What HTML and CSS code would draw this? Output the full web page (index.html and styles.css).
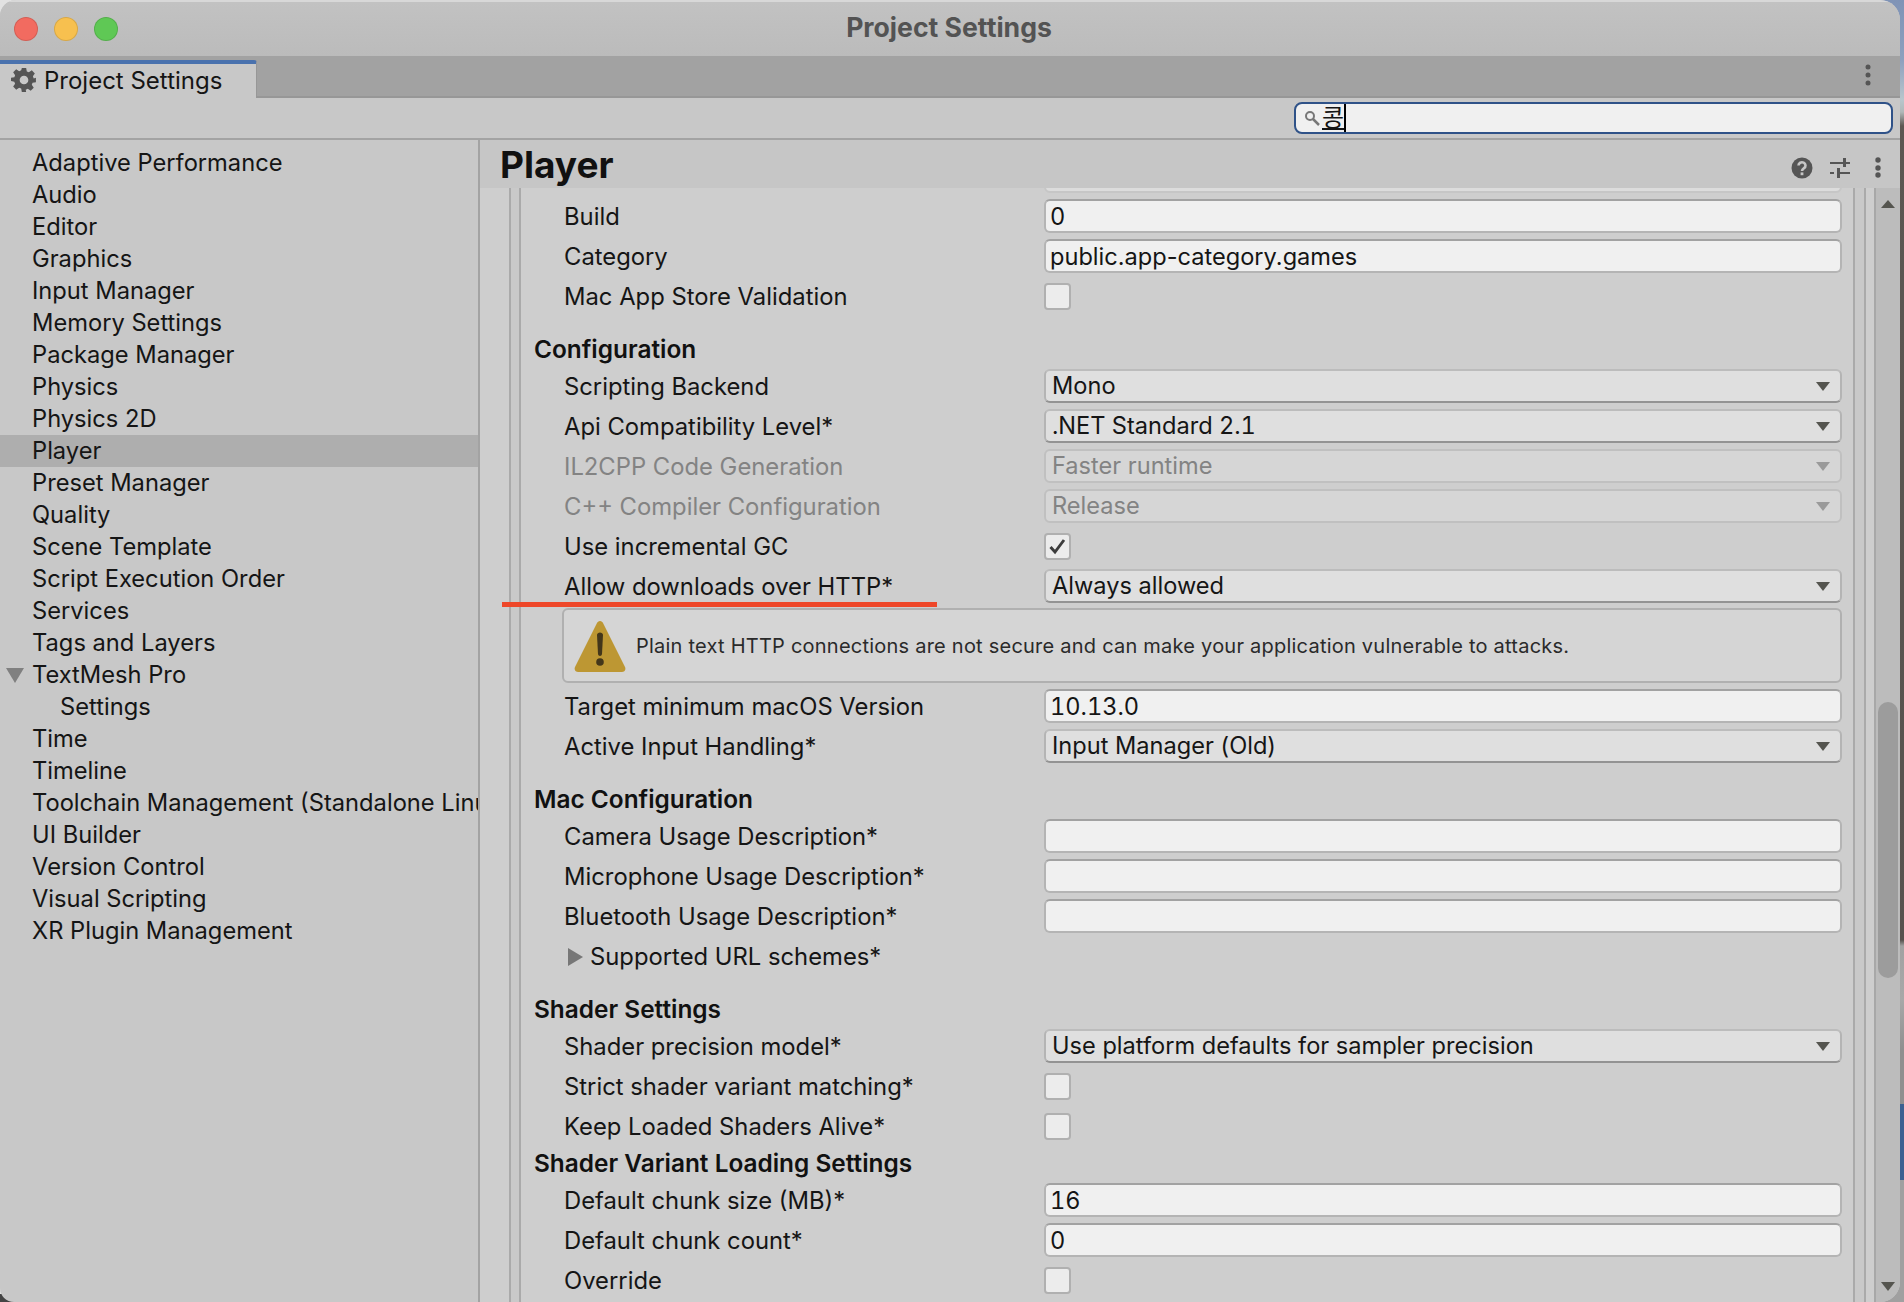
FILE: index.html
```html
<!DOCTYPE html>
<html lang="en">
<head>
	<meta charset="UTF-8">
	<title>Project Settings</title>
	<link rel="stylesheet" href="styles.css">
</head>
<body>
	<div class="window">
		<div class="titlebar">
			<div class="lights">
				<span class="light red"></span>
				<span class="light yellow"></span>
				<span class="light green"></span>
			</div>
			<div class="title">Project Settings</div>
		</div>
		<div class="tabbar">
			<div class="tab">
				<svg class="gear" width="26" height="26" viewBox="0 0 24 24"><path fill="#555" fill-rule="evenodd" d="M10 1h4l.6 3.100 1.900.8 2.700-1.800 2.800 2.800-1.800 2.700.8 1.900L23 10v4l-3.100.6-.7 1.800 1.800 2.700-2.800 2.800-2.700-1.800-1.900.8L14 23h-4l-.6-3.100-1.900-.8-2.700 1.800L2 18.100l1.800-2.700-.8-1.900L0 13v-3l3.100-.6.7-1.900L2 4.900 4.800 2.100l2.700 1.800 1.900-.8zM12 8a4 4 0 1 0 0 8 4 4 0 0 0 0-8z"/></svg>
				<span>Project Settings</span>
			</div>
			<svg class="tab-menu" width="10" height="22" viewBox="0 0 10 22"><circle cx="5" cy="3" r="2.500" fill="#555"/><circle cx="5" cy="11" r="2.500" fill="#555"/><circle cx="5" cy="19" r="2.500" fill="#555"/></svg>
		</div>
		<div class="toolbar">
			<div class="search">
				<svg width="16" height="16" viewBox="0 0 16 16"><circle cx="6" cy="6" r="4" fill="none" stroke="#777" stroke-width="2"/><path d="M9 9l6 6" stroke="#777" stroke-width="2.500"/></svg>
				<span class="search-text">콩</span>
			</div>
		</div>
		<div class="main">
			<ul class="sidebar">
				<li>Adaptive Performance</li>
				<li>Audio</li>
				<li>Editor</li>
				<li>Graphics</li>
				<li>Input Manager</li>
				<li>Memory Settings</li>
				<li>Package Manager</li>
				<li>Physics</li>
				<li>Physics 2D</li>
				<li class="active">Player</li>
				<li>Preset Manager</li>
				<li>Quality</li>
				<li>Scene Template</li>
				<li>Script Execution Order</li>
				<li>Services</li>
				<li>Tags and Layers</li>
				<li class="parent">TextMesh Pro</li>
				<li class="child">Settings</li>
				<li>Time</li>
				<li>Timeline</li>
				<li>Toolchain Management (Standalone Linux)</li>
				<li>UI Builder</li>
				<li>Version Control</li>
				<li>Visual Scripting</li>
				<li>XR Plugin Management</li>
			</ul>
			<div class="panel">
				<div class="panel-header">
					<h1>Player</h1>
					<div class="panel-icons">
						<svg class="help-icon" width="22" height="22" viewBox="0 0 22 22"><circle cx="11" cy="11" r="10.500" fill="#555"/><path d="M7.500 8.500a3.500 3.200 0 1 1 5.500 2.600c-1.300.9-2 1.400-2 3" fill="none" stroke="#c6c6c6" stroke-width="2.600"/><rect x="9.600" y="15.400" width="2.800" height="2.800" fill="#c6c6c6"/></svg>
						<svg width="20" height="20" viewBox="0 0 20 20"><g fill="#555"><rect x="0" y="4" width="13" height="2"/><rect x="13" y="0" width="3" height="9"/><rect x="16" y="4" width="4" height="2"/><rect x="0" y="14" width="4" height="2"/><rect x="7" y="10" width="3" height="10"/><rect x="10" y="14" width="10" height="2"/></g></svg>
						<svg width="20" height="22" viewBox="0 0 20 22"><circle cx="10" cy="3" r="2.700" fill="#555"/><circle cx="10" cy="11" r="2.700" fill="#555"/><circle cx="10" cy="18" r="2.700" fill="#555"/></svg>
					</div>
				</div>
				<div class="scrollview">
					<div class="pane">
						<div class="pane-box">
							<div class="pane-inner">
								<div class="row stub"><label></label><div class="field"></div></div>
								<div class="row"><label>Build</label><div class="field num">0</div></div>
								<div class="row"><label>Category</label><div class="field">public.app-category.games</div></div>
								<div class="row"><label>Mac App Store Validation</label><div class="checkbox"></div></div>

								<h2>Configuration</h2>
								<div class="row"><label>Scripting Backend</label><div class="select">Mono</div></div>
								<div class="row"><label>Api Compatibility Level*</label><div class="select num">.NET Standard 2.1</div></div>
								<div class="row disabled"><label>IL2CPP Code Generation</label><div class="select">Faster runtime</div></div>
								<div class="row disabled"><label>C++ Compiler Configuration</label><div class="select">Release</div></div>
								<div class="row"><label>Use incremental GC</label><div class="checkbox"><svg width="19" height="17" viewBox="0 0 19 17"><path d="M2.500 9l4.500 5 9-12" fill="none" stroke="#3c3c3c" stroke-width="2.900"/></svg></div></div>
								<div class="row marked"><label>Allow downloads over HTTP*</label><div class="select">Always allowed</div></div>
								<div class="help">
									<svg width="52" height="52" viewBox="0 0 52 52"><path d="M26 1c1.500 0 2.500 1 3 2l22 44c1 2 0 5-3 5H4c-3 0-4-3-3-5L23 3c.5-1 1.500-2 3-2z" fill="#bd9733"/><path d="M23 15c0-3.500 6-3.500 6 0l-1 19c-.2 2.500-3.800 2.500-4 0z" fill="#43361a"/><circle cx="26" cy="42" r="3.800" fill="#43361a"/></svg>
									<p>Plain text HTTP connections are not secure and can make your application vulnerable to attacks.</p>
								</div>
								<div class="row"><label>Target minimum macOS Version</label><div class="field num">10.13.0</div></div>
								<div class="row"><label>Active Input Handling*</label><div class="select">Input Manager (Old)</div></div>

								<h2>Mac Configuration</h2>
								<div class="row"><label>Camera Usage Description*</label><div class="field"></div></div>
								<div class="row"><label>Microphone Usage Description*</label><div class="field"></div></div>
								<div class="row"><label>Bluetooth Usage Description*</label><div class="field"></div></div>
								<div class="row"><label class="foldout">Supported URL schemes*</label></div>

								<h2>Shader Settings</h2>
								<div class="row"><label>Shader precision model*</label><div class="select">Use platform defaults for sampler precision</div></div>
								<div class="row"><label>Strict shader variant matching*</label><div class="checkbox"></div></div>
								<div class="row"><label>Keep Loaded Shaders Alive*</label><div class="checkbox"></div></div>
								<h2 class="tight">Shader Variant Loading Settings</h2>
								<div class="row"><label>Default chunk size (MB)*</label><div class="field num">16</div></div>
								<div class="row"><label>Default chunk count*</label><div class="field num">0</div></div>
								<div class="row"><label>Override</label><div class="checkbox"></div></div>
							</div>
						</div>
					</div>
					<div class="scrollbar">
						<span class="arrow up"></span>
						<div class="thumb"></div>
						<span class="arrow down"></span>
					</div>
				</div>
			</div>
		</div>
	</div>
</body>
</html>
```

FILE: styles.css
```css
*{
	margin: 0;
	padding: 0;
	box-sizing: border-box;
}
body{
	width: 1904px;
	height: 1302px;
	overflow: hidden;
	font-family: Inter, "Noto Sans CJK KR", sans-serif;
	font-size: 23.800px;
	color: #151515;
	background:
		linear-gradient(#444,#444) left bottom / 24px 8px no-repeat,
		linear-gradient(to bottom, #7f93b6 0, #8da0be 60px, #b8c6cc 100px, #b0b8b8 112px, #5c5752 126px, #57524e 940px, #a2a2a2 946px, #a8a8a8 1000px, #8f8f8f 1050px, #8f8f8f 1104px, #3c6091 1104px, #3c6091 1180px, #a0a0a0 1180px, #a0a0a0 1302px) right top / 30px 100% no-repeat,
		#e2e2e2;
}
.window{
	width: 1900px;
	height: 1302px;
	display: flex;
	flex-direction: column;
	overflow: hidden;
	border-radius: 16px 20px 20px 14px;
	background-color: #c8c8c8;
}
.titlebar{
	height: 56px;
	display: flex;
	align-items: center;
	position: relative;
	border-top: 2px solid #d8d8d8;
	background: linear-gradient(#c2c2c2,#bbb);
}
.lights{
	display: flex;
	gap: 16px;
	padding-left: 14px;
}
.light{
	width: 24px;
	height: 24px;
	border-radius: 50%;
	border: 1px solid rgba(0,0,0,.12);
}
.red{
	background-color: #f26b60;
}
.yellow{
	background-color: #f7c04f;
}
.green{
	background-color: #5fc855;
}
.title{
	flex: 1;
	text-align: center;
	padding: 0 120px 4px 0;
	font-weight: 700;
	font-size: 26.600px;
	color: #535353;
}
.tabbar{
	height: 42px;
	display: flex;
	justify-content: space-between;
	align-items: center;
	padding-right: 27px;
	background-color: #a2a2a2;
	border-bottom: 2px solid #979797;
}
.tab{
	width: 257px;
	height: 38px;
	margin-top: 6px;
	display: flex;
	align-items: center;
	gap: 7px;
	padding: 0 0 2px 11px;
	font-size: 24px;
	background-color: #c8c8c8;
	border-top: 4px solid #4a72ae;
	border-right: 1px solid #979797;
	border-top-right-radius: 3px;
}
.tab-menu{
	margin-top: -2px;
}
.toolbar{
	height: 42px;
	padding: 4px 7px 0 0;
	display: flex;
	justify-content: flex-end;
	border-bottom: 2px solid #a3a3a3;
}
.search{
	width: 599px;
	height: 32px;
	display: flex;
	align-items: center;
	gap: 2px;
	padding-left: 8px;
	background-color: #f0f0f0;
	border: 2px solid #2f5288;
	border-radius: 8px;
}
.search-text{
	height: 28px;
	line-height: 24px;
	font-size: 24px;
	font-family: "Noto Sans CJK KR", sans-serif;
	text-decoration: underline;
	border-right: 2px solid #000;
}
.main{
	flex: 1;
	display: flex;
	min-height: 0;
}
.sidebar{
	width: 480px;
	padding-top: 7px;
	list-style: none;
	font-size: 23.700px;
	border-right: 2px solid #a3a3a3;
	overflow: hidden;
	white-space: nowrap;
}
.sidebar li{
	height: 32px;
	line-height: 32px;
	padding-left: 32px;
	position: relative;
}
.sidebar .active{
	background-color: #aeaeae;
}
.sidebar .child{
	padding-left: 60px;
}
.sidebar .parent::before{
	content: "";
	position: absolute;
	left: 6px;
	top: 9px;
	border-left: 9px solid transparent;
	border-right: 9px solid transparent;
	border-top: 15px solid #808080;
}
.panel{
	flex: 1;
	display: flex;
	flex-direction: column;
	min-width: 0;
}
.panel-header{
	height: 48px;
	display: flex;
	justify-content: space-between;
	align-items: center;
	padding: 0 12px 0 20px;
	background-color: #c6c6c6;
}
.panel-header h1{
	font-size: 37px;
	font-weight: 700;
	color: #111;
}
.panel-icons{
	display: flex;
	align-items: center;
	gap: 18px;
	margin-top: 8px;
}
.help-icon{
	position: relative;
	left: 1px;
}
.scrollview{
	flex: 1;
	display: flex;
	min-height: 0;
}
.pane{
	flex: 1;
	padding: 0 8px 0 29px;
	background-color: #cecece;
	overflow: hidden;
}
.pane-box{
	height: 100%;
	padding: 0 9px 0 8px;
	background-color: #c9c9c9;
	border-left: 2px solid #aaa;
	border-right: 2px solid #aaa;
}
.pane-inner{
	display: flow-root;
	height: 100%;
	background-color: #cecece;
	border-left: 2px solid #aaa;
	border-right: 2px solid #aaa;
}
.row{
	height: 40px;
	display: flex;
	align-items: center;
	padding: 0 11px 0 43px;
}
.row label{
	width: 480px;
	flex: none;
	white-space: nowrap;
}
.stub{
	margin-top: -32px;
}
.field,
.select{
	flex: 1;
	height: 34px;
	border-radius: 6px;
	border: 2px solid #b4b4b4;
}
.field{
	padding-left: 4px;
	line-height: 32px;
	font-size: 23.600px;
	background-color: #f0f0f0;
	border-top-color: #a2a2a2;
}
.num{
	font-variant-numeric: tabular-nums;
}
.stub .field{
	background-color: #dcdcdc;
	border-color: #c6c6c6;
}
.select{
	padding-left: 6px;
	line-height: 30px;
	font-size: 23.600px;
	position: relative;
	background-color: #dfdfdf;
	border-top-color: #bcbcbc;
	border-bottom-color: #939393;
}
.select::after{
	content: "";
	position: absolute;
	right: 10px;
	top: 11px;
	border-left: 7.500px solid transparent;
	border-right: 7.500px solid transparent;
	border-top: 9px solid #55554f;
}
.checkbox{
	width: 27px;
	height: 27px;
	display: flex;
	align-items: center;
	justify-content: center;
	background-color: #ececec;
	border: 2px solid #b0b0b0;
	border-radius: 4px;
}
.disabled label,
.disabled .select{
	color: #838383;
}
.disabled .select{
	background-color: #d6d6d6;
	border-color: #c0c0c0;
}
.disabled .select::after{
	border-top-color: #9a9a9a;
}
.marked{
	position: relative;
}
.marked::after{
	content: "";
	position: absolute;
	left: -19px;
	bottom: -1px;
	width: 435px;
	height: 5px;
	background-color: #ee4729;
}
.foldout{
	position: relative;
	padding-left: 26px;
}
.foldout::before{
	content: "";
	position: absolute;
	left: 4px;
	top: 6px;
	border-top: 9px solid transparent;
	border-bottom: 9px solid transparent;
	border-left: 15px solid #777;
}
h2{
	height: 50px;
	padding: 17px 0 0 13px;
	line-height: 33px;
	font-size: 24.400px;
	font-weight: 600;
	color: #111;
}
h2.tight{
	height: 34px;
	padding-top: 1px;
}
.help{
	height: 75px;
	margin: 2px 11px 3px 41px;
	display: flex;
	align-items: center;
	gap: 10px;
	padding-left: 10px;
	background-color: #d5d5d5;
	border: 2px solid #b0b0b0;
	border-radius: 6px;
}
.help p{
	font-size: 20px;
	letter-spacing: .23px;
	color: #2a2a2a;
	white-space: nowrap;
}
.scrollbar{
	width: 26px;
	display: flex;
	flex-direction: column;
	align-items: center;
	padding: 12px 0 11px;
	background-color: #bcbcbc;
	border-left: 2px solid #a8a8a8;
}
.arrow{
	width: 0;
	height: 0;
	border-left: 7px solid transparent;
	border-right: 7px solid transparent;
}
.up{
	border-bottom: 8px solid #55554f;
}
.down{
	margin-top: auto;
	border-top: 9px solid #55554f;
}
.thumb{
	width: 20px;
	height: 276px;
	margin-top: 494px;
	border-radius: 10px;
	background-color: #9c9c9c;
}
```
